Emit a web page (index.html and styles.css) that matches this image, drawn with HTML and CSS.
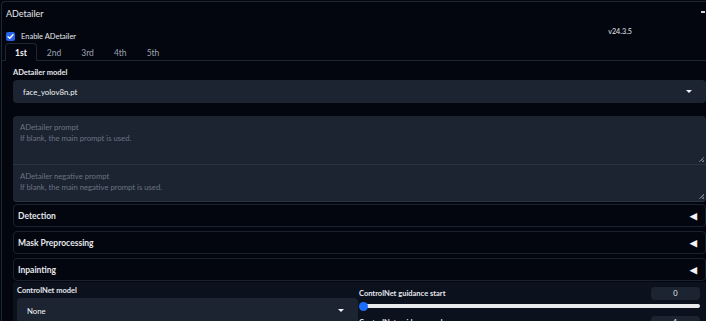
FILE: index.html
```html
<!DOCTYPE html>
<html>
<head>
<meta charset="utf-8">
<link rel="stylesheet" href="styles.css">
</head>
<body>
<div class="outer">
  <div class="outer-head">
    <span class="title">ADetailer</span>
    <span class="corner"></span>
  </div>
  <div class="top-row">
    <label class="check">
      <span class="box"><svg width="9" height="9" viewBox="0 0 9 9"><path d="M2 4.6 L3.8 6.3 L7 2.8" fill="none" stroke="#fff" stroke-width="1.3" stroke-linecap="round" stroke-linejoin="round"/></svg></span>
      <span>Enable ADetailer</span>
    </label>
    <span class="version">v24.3.5</span>
  </div>
  <div class="tabs">
    <div class="tab sel">1st</div>
    <div class="tab">2nd</div>
    <div class="tab">3rd</div>
    <div class="tab">4th</div>
    <div class="tab">5th</div>
  </div>
  <div class="panel">
    <div class="label">ADetailer model</div>
    <div class="select">
      <span>face_yolov8n.pt</span>
      <span class="caret"></span>
    </div>
    <div class="prompts">
      <div class="ta tall">
        <div>ADetailer prompt</div>
        <div>If blank, the main prompt is used.</div>
        <span class="grip"></span>
      </div>
      <div class="ta">
        <div>ADetailer negative prompt</div>
        <div>If blank, the main negative prompt is used.</div>
        <span class="grip"></span>
      </div>
    </div>
    <div class="accs">
      <div class="acc"><span>Detection</span><span class="tri">◀</span></div>
      <div class="acc"><span>Mask Preprocessing</span><span class="tri">◀</span></div>
      <div class="acc"><span>Inpainting</span><span class="tri">◀</span></div>
    </div>
    <div class="group">
      <div class="col left">
        <div class="label">ControlNet model</div>
        <div class="select small">
          <span>None</span>
          <span class="caret"></span>
        </div>
      </div>
      <div class="col right">
        <div class="slider-head">
          <span class="label">ControlNet guidance start</span>
          <span class="num">0</span>
        </div>
        <div class="track"><span class="thumb"></span></div>
        <div class="slider-head">
          <span class="label">ControlNet guidance end</span>
          <span class="num">1</span>
        </div>
      </div>
    </div>
  </div>
</div>
</body>
</html>
```
FILE: styles.css
```css
* { box-sizing: border-box; }
html, body {
  margin: 0;
  background: #03060f;
  color: #e5e7eb;
  font-family: Lato, "Noto Sans", sans-serif;
  overflow: hidden;
}
.outer {
  margin: 1px 0 0 1px;
  border-top: 1px solid #1f2735;
  border-left: 1px solid #1f2735;
  border-top-left-radius: 4px;
  height: 330px;
  position: relative;
}
.outer-head {
  height: 24px;
  display: flex;
  align-items: center;
  justify-content: space-between;
  padding-left: 4px;
}
.title { font-size: 9px; color: #e5e7eb; margin-top: -2px; }
.corner {
  width: 4px; height: 2px; background: #cfd3da; margin-right: 1px; margin-top: -4px;
}
.top-row {
  height: 17px;
  display: flex;
  justify-content: space-between;
  align-items: flex-start;
  position: relative;
}
.check {
  display: flex;
  align-items: center;
  gap: 6px;
  font-size: 7.5px;
  padding-left: 4px;
  margin-top: 6px;
}
.box {
  width: 9px; height: 9px;
  background: #2563eb;
  border-radius: 2px;
  display: flex;
}
.version {
  font-size: 7.2px;
  color: #e5e7eb;
  margin-right: 74px;
  margin-top: 1px;
}
.tabs {
  display: flex;
  height: 18px;
  border-bottom: 1px solid #1f2735;
  padding-left: 3px;
}
.tab {
  font-size: 8.5px;
  color: #9ca3af;
  padding: 1px 10px 0;
  display: flex;
  align-items: center;
  height: 18px;
}
.tab.sel {
  color: #f3f4f6;
  font-weight: 700;
  border: 1px solid #1f2735;
  border-bottom: 1px solid #03060f;
  border-radius: 4px 4px 0 0;
  margin-bottom: -1px;
  padding: 1px 9px 0;
  height: 18px;
}
.panel {
  padding: 5px 0 0 11px;
}
.label {
  font-size: 7.5px;
  font-weight: 700;
  color: #e5e7eb;
  height: 13px;
  line-height: 13px;
}
.select {
  margin-top: 1px;
  height: 23px;
  background: #1c2432;
  border-radius: 4px;
  display: flex;
  align-items: center;
  justify-content: space-between;
  padding: 0 14px 0 10px;
  font-size: 7.8px;
  color: #f3f4f6;
}
.caret {
  width: 0; height: 0;
  border-left: 3px solid transparent;
  border-right: 3px solid transparent;
  border-top: 3px solid #f3f4f6;
}
.prompts {
  margin-top: 13px;
  display: flex;
  flex-direction: column;
}
.ta {
  background: #1c2432;
  height: 37px;
  padding: 6px 7px;
  font-size: 7.7px;
  line-height: 11px;
  color: #6b7380;
  position: relative;
  border-bottom: 1px solid #2a3341;
  border-radius: 0 0 4px 4px;
}
.ta.tall {
  height: 49px;
  border-radius: 4px 4px 0 0;
}
.grip {
  position: absolute;
  right: 2px; bottom: 2px;
  width: 5px; height: 5px;
  background: linear-gradient(135deg, transparent 45%, #6b7380 45%, #6b7380 60%, transparent 60%, transparent 75%, #6b7380 75%);
}
.accs {
  margin-top: 2px;
  display: flex;
  flex-direction: column;
  gap: 4px;
}
.acc {
  height: 23px;
  border: 1px solid #1a2230;
  border-radius: 4px;
  display: flex;
  align-items: center;
  justify-content: space-between;
  padding: 0 8px 0 4px;
  font-size: 8.5px;
  font-weight: 700;
  color: #e5e7eb;
}
.tri { font-size: 9px; color: #f3f4f6; }
.group {
  margin-top: 1px;
  background: #0b111d;
  display: flex;
  gap: 1px;
  padding: 3px 4px 0 4px;
}
.col.left { width: 341px; }
.col.left .label { height: 13px; line-height: 12px; }
.col.left .select { margin-top: 0; height: 25px; }
.col.right { flex: 1; }
.slider-head {
  display: flex;
  justify-content: space-between;
  align-items: center;
  height: 16px;
}
.num {
  width: 49px; height: 13px;
  background: #1c2432;
  border-radius: 4px;
  font-size: 7.5px;
  display: flex; align-items: center; justify-content: center;
  margin-right: 2px;
}
.track {
  margin: 3px 2px 6px 1px;
  height: 4px;
  background: #e9eaec;
  border-radius: 2px;
  position: relative;
}
.thumb {
  position: absolute;
  left: -1px; top: -2.5px;
  width: 9px; height: 9px;
  border-radius: 50%;
  background: #1a6dff;
}
```
